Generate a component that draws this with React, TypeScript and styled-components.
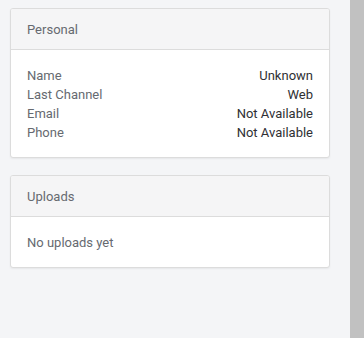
import React from "react";
import styled, { createGlobalStyle } from "styled-components";

const Global = createGlobalStyle`
  html, body { margin: 0; padding: 0; }
  body { background: #f4f5f7; font-family: Roboto, "Noto Sans", sans-serif; }
`;

const Page = styled.div`
  display: flex;
  width: 364px;
  height: 338px;
  background: #f4f5f7;
`;

const Main = styled.div`
  flex: 1;
  display: flex;
  flex-direction: column;
  gap: 17px;
  padding: 8px 20px 0 10px;
`;

const Scrollbar = styled.div`
  width: 14px;
  background: #c1c1c1;
`;

const Card = styled.div`
  background: #fff;
  border: 1px solid #dcdcdc;
  border-radius: 3px;
  box-shadow: 0 1px 2px rgba(0, 0, 0, 0.06);
  overflow: hidden;
`;

const CardHeader = styled.div`
  height: 40px;
  display: flex;
  align-items: center;
  padding: 0 16px;
  background: #f5f5f6;
  border-bottom: 1px solid #dcdcdc;
  font-size: 13px;
  color: #666a70;
`;

const CardBody = styled.div`
  padding: 16px 16px 15px;
  font-size: 13px;
  line-height: 19px;
`;

const Row = styled.div`
  display: flex;
  justify-content: space-between;
`;

const Label = styled.span`
  color: #666a70;
`;

const Value = styled.span`
  color: #2f3033;
`;

const Empty = styled.div`
  color: #666a70;
`;

const rows: [string, string][] = [
  ["Name", "Unknown"],
  ["Last Channel", "Web"],
  ["Email", "Not Available"],
  ["Phone", "Not Available"],
];

export default function App() {
  return (
    <Page>
      <Global />
      <Main>
        <Card>
          <CardHeader>Personal</CardHeader>
          <CardBody>
            {rows.map(([l, v]) => (
              <Row key={l}>
                <Label>{l}</Label>
                <Value>{v}</Value>
              </Row>
            ))}
          </CardBody>
        </Card>
        <Card>
          <CardHeader>Uploads</CardHeader>
          <CardBody>
            <Empty>No uploads yet</Empty>
          </CardBody>
        </Card>
      </Main>
      <Scrollbar />
    </Page>
  );
}
